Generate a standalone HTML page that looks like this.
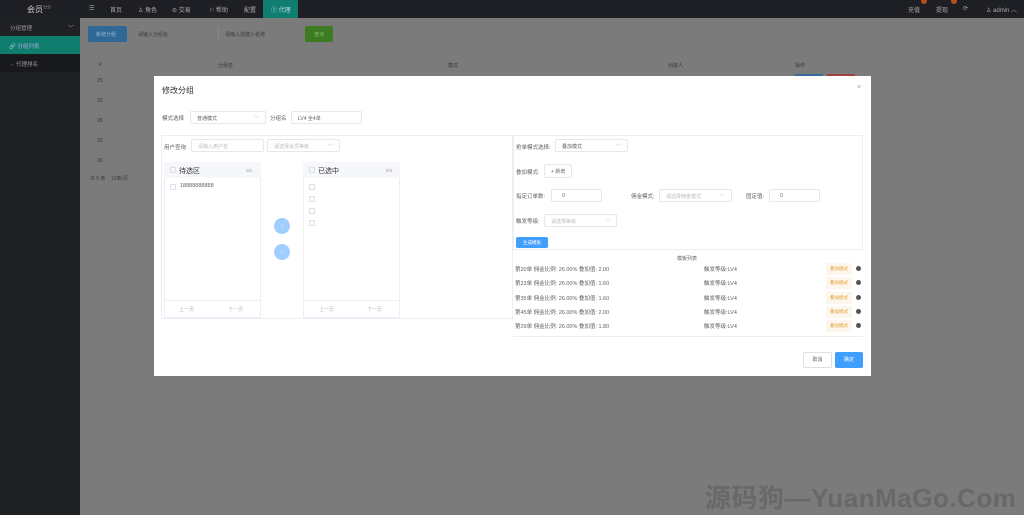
<!DOCTYPE html>
<html style="background:#7b7b7b"><head><meta charset="utf-8">
<style>
*{margin:0;padding:0;box-sizing:border-box}
html,body{background:#7b7b7b}
body{width:1024px;height:515px;overflow:hidden;font-family:"Liberation Sans","Noto Sans CJK SC",sans-serif;position:relative;font-size:6px;color:#333}
.a{position:absolute;white-space:nowrap}
.bg{left:80px;top:18px;width:944px;height:497px;background:#7b7b7b}
.top{left:0;top:0;width:1024px;height:18px;background:#1e1f24}
.side{left:0;top:18px;width:80px;height:497px;background:#1f2024}
.nav{top:5px;color:#aaa;font-size:6px}
.dim{color:#3a3a3a;font-size:5px}
.modal{left:154px;top:76px;width:717px;height:300px;background:#fff}
.inp{border:1px solid #e4e7ed;border-radius:2px;height:13px;background:#fff;font-size:5px;color:#bbb;padding:3px 6px}
.lab{font-size:5.5px;color:#606266}
.row{font-size:5.5px;color:#606266}
.tag{background:#fdf6ec;color:#e6a23c;font-size:4.5px;padding:3px 4px;border-radius:1px}
.dot{width:5px;height:5px;border-radius:50%;background:#555}
.cb{width:6px;height:6px;border:1px solid #dcdfe6;border-radius:1px}
</style></head><body>
<div class="a bg"></div>
<div class="a top"></div>
<div class="a" style="left:27px;top:4px;color:#ccc;font-size:8px">会员<sup style="font-size:4px;color:#999">分分</sup></div>
<div class="a nav" style="left:89px">☰</div>
<div class="a nav" style="left:110px">首页</div>
<div class="a nav" style="left:138px">♙ 角色</div>
<div class="a nav" style="left:172px">⊜ 交易</div>
<div class="a nav" style="left:209px">⚐ 帮助</div>
<div class="a nav" style="left:244px">配置</div>
<div class="a" style="left:263px;top:0;width:35px;height:18px;background:#0f7e6e"></div>
<div class="a nav" style="left:271px;color:#bde">① 代理</div>
<div class="a nav" style="left:908px">充值</div>
<div class="a" style="left:921px;top:-2px;width:6px;height:6px;border-radius:50%;background:#b5501e"></div>
<div class="a nav" style="left:936px">提现</div>
<div class="a" style="left:951px;top:-2px;width:6px;height:6px;border-radius:50%;background:#b5501e"></div>
<div class="a nav" style="left:963px">⟳</div>
<div class="a nav" style="left:986px">♙ admin ︿</div>
<div class="a side"></div>
<div class="a" style="left:10px;top:24px;color:#999;font-size:5.5px">分组管理</div>
<div class="a" style="left:68px;top:23px;color:#999;font-size:6px">﹀</div>
<div class="a" style="left:0;top:36px;width:80px;height:18px;background:#0f7e6e"></div>
<div class="a" style="left:9px;top:42px;color:#aad;font-size:5.5px">🔗 分组列表</div>
<div class="a" style="left:0;top:54px;width:80px;height:18px;background:#18191d"></div>
<div class="a" style="left:9px;top:60px;color:#999;font-size:5.5px">⇔ 代理排名</div>
<div class="a" style="left:88px;top:26px;width:39px;height:16px;background:#2f6797;border-radius:2px"></div>
<div class="a" style="left:96px;top:31px;color:#9bc;font-size:5px">新增分组</div>
<div class="a dim" style="left:138px;top:31px">请输入分组名</div>
<div class="a" style="left:218px;top:27px;width:1px;height:14px;background:#888"></div>
<div class="a dim" style="left:225px;top:31px">请输入创建人名称</div>
<div class="a" style="left:305px;top:26px;width:28px;height:16px;background:#3d7b22;border-radius:2px"></div>
<div class="a" style="left:314px;top:31px;color:#8b6;font-size:5px">查询</div>
<div class="a dim" style="left:99px;top:62px">#</div>
<div class="a dim" style="left:218px;top:62px">分组名</div>
<div class="a dim" style="left:448px;top:62px">模式</div>
<div class="a dim" style="left:668px;top:62px">创建人</div>
<div class="a dim" style="left:795px;top:62px">操作</div>
<div class="a" style="left:795px;top:74px;width:28px;height:3px;background:#3a6a99"></div>
<div class="a" style="left:827px;top:74px;width:28px;height:3px;background:#a04040"></div>
<div class="a dim" style="left:97px;top:78px">25</div>
<div class="a dim" style="left:97px;top:98px">26</div>
<div class="a dim" style="left:97px;top:118px">28</div>
<div class="a dim" style="left:97px;top:138px">33</div>
<div class="a dim" style="left:97px;top:158px">36</div>
<div class="a dim" style="left:90px;top:175px">共 5 条 &nbsp;&nbsp; 10条/页</div>

<div class="a modal"></div>
<div class="a" style="left:162px;top:85px;font-size:8px;color:#303133">修改分组</div>
<div class="a" style="left:857px;top:84px;font-size:7px;color:#999">×</div>
<div class="a lab" style="left:162px;top:114px">模式选择</div>
<div class="a inp" style="left:190px;top:111px;width:76px;color:#606266">普通模式<span style="float:right;color:#bbb">﹀</span></div>
<div class="a lab" style="left:270px;top:114px">分组名</div>
<div class="a inp" style="left:291px;top:111px;width:71px;color:#606266">LV4 全4单</div>
<div class="a" style="left:161px;top:135px;width:352px;height:184px;border:1px solid #ebeef5"></div>
<div class="a lab" style="left:164px;top:143px">用户查询</div>
<div class="a inp" style="left:191px;top:139px;width:73px">请输入用户名</div>
<div class="a inp" style="left:267px;top:139px;width:73px">请选择会员等级<span style="float:right">﹀</span></div>
<div class="a" style="left:164px;top:162px;width:97px;height:156px;border:1px solid #ebeef5"></div>
<div class="a" style="left:164px;top:162px;width:97px;height:16px;background:#f5f7fa"></div>
<div class="a cb" style="left:170px;top:167px"></div>
<div class="a" style="left:179px;top:166px;font-size:7px;color:#303133">待选区</div>
<div class="a" style="left:246px;top:168px;font-size:4.5px;color:#999">0/1</div>
<div class="a cb" style="left:170px;top:184px"></div>
<div class="a" style="left:180px;top:183px;font-size:5.5px;color:#606266">18888888888</div>
<div class="a" style="left:164px;top:300px;width:97px;height:1px;background:#ebeef5"></div>
<div class="a" style="left:179px;top:306px;font-size:5px;color:#bbb">上一页</div>
<div class="a" style="left:228px;top:306px;font-size:5px;color:#bbb">下一页</div>
<div class="a" style="left:274px;top:218px;width:16px;height:16px;border-radius:50%;background:#a0cfff;color:#fff;font-size:5px;text-align:center;line-height:16px">‹</div>
<div class="a" style="left:274px;top:244px;width:16px;height:16px;border-radius:50%;background:#a0cfff;color:#fff;font-size:5px;text-align:center;line-height:16px">›</div>
<div class="a" style="left:303px;top:162px;width:97px;height:156px;border:1px solid #ebeef5"></div>
<div class="a" style="left:303px;top:162px;width:97px;height:16px;background:#f5f7fa"></div>
<div class="a cb" style="left:309px;top:167px"></div>
<div class="a" style="left:318px;top:166px;font-size:7px;color:#303133">已选中</div>
<div class="a" style="left:386px;top:168px;font-size:4.5px;color:#999">0/4</div>
<div class="a cb" style="left:309px;top:184px"></div>
<div class="a cb" style="left:309px;top:196px"></div>
<div class="a cb" style="left:309px;top:208px"></div>
<div class="a cb" style="left:309px;top:220px"></div>
<div class="a" style="left:303px;top:300px;width:97px;height:1px;background:#ebeef5"></div>
<div class="a" style="left:319px;top:306px;font-size:5px;color:#bbb">上一页</div>
<div class="a" style="left:367px;top:306px;font-size:5px;color:#bbb">下一页</div>

<div class="a" style="left:513px;top:135px;width:350px;height:115px;border:1px solid #ebeef5"></div>
<div class="a lab" style="left:516px;top:143px">抢单模式选择:</div>
<div class="a inp" style="left:555px;top:139px;width:73px;color:#606266">叠加模式<span style="float:right;color:#bbb">﹀</span></div>
<div class="a lab" style="left:516px;top:168px">叠加模式:</div>
<div class="a inp" style="left:544px;top:164px;width:28px;height:14px;color:#606266">+ 新增</div>
<div class="a lab" style="left:516px;top:192px">指定订单数:</div>
<div class="a inp" style="left:551px;top:189px;width:51px;color:#606266">&nbsp;&nbsp;&nbsp;0</div>
<div class="a lab" style="left:631px;top:192px">佣金模式:</div>
<div class="a inp" style="left:659px;top:189px;width:73px">请选择佣金模式<span style="float:right">﹀</span></div>
<div class="a lab" style="left:746px;top:192px">固定值:</div>
<div class="a inp" style="left:769px;top:189px;width:51px;color:#606266">&nbsp;&nbsp;&nbsp;0</div>
<div class="a lab" style="left:516px;top:217px">触发等级:</div>
<div class="a inp" style="left:544px;top:214px;width:73px">请选择等级<span style="float:right">﹀</span></div>
<div class="a" style="left:516px;top:237px;width:32px;height:11px;background:#409eff;border-radius:2px;color:#fff;font-size:4.5px;text-align:center;line-height:11px">生成模板</div>
<div class="a" style="left:677px;top:255px;font-size:5px;color:#666">模板列表</div>
<div class="a" style="left:513px;top:262px;width:350px;height:75px;border-bottom:1px solid #ebeef5"></div>
<div class="a row" style="left:515px;top:265px">第20单 佣金比例: 26.00% 叠加值: 2.00</div>
<div class="a row" style="left:515px;top:279px">第23单 佣金比例: 26.00% 叠加值: 1.60</div>
<div class="a row" style="left:515px;top:294px">第35单 佣金比例: 26.00% 叠加值: 1.60</div>
<div class="a row" style="left:515px;top:308px">第45单 佣金比例: 26.00% 叠加值: 2.00</div>
<div class="a row" style="left:515px;top:322px">第29单 佣金比例: 26.00% 叠加值: 1.80</div>
<div class="a row" style="left:704px;top:265px">触发等级:LV4</div>
<div class="a row" style="left:704px;top:279px">触发等级:LV4</div>
<div class="a row" style="left:704px;top:294px">触发等级:LV4</div>
<div class="a row" style="left:704px;top:308px">触发等级:LV4</div>
<div class="a row" style="left:704px;top:322px">触发等级:LV4</div>
<div class="a tag" style="left:826px;top:263px">叠加模式</div>
<div class="a tag" style="left:826px;top:277px">叠加模式</div>
<div class="a tag" style="left:826px;top:292px">叠加模式</div>
<div class="a tag" style="left:826px;top:306px">叠加模式</div>
<div class="a tag" style="left:826px;top:320px">叠加模式</div>
<div class="a dot" style="left:856px;top:266px"></div>
<div class="a dot" style="left:856px;top:280px"></div>
<div class="a dot" style="left:856px;top:295px"></div>
<div class="a dot" style="left:856px;top:309px"></div>
<div class="a dot" style="left:856px;top:323px"></div>
<div class="a" style="left:803px;top:352px;width:29px;height:16px;border:1px solid #dcdfe6;border-radius:2px;font-size:5px;color:#606266;text-align:center;line-height:14px">取消</div>
<div class="a" style="left:835px;top:352px;width:28px;height:16px;background:#409eff;border-radius:2px;font-size:5px;color:#fff;text-align:center;line-height:16px">确定</div>

<div class="a" style="left:705px;top:478px;font-size:26px;font-weight:bold;color:#686868;letter-spacing:0.5px">源码狗—YuanMaGo.Com</div>
</body></html>
